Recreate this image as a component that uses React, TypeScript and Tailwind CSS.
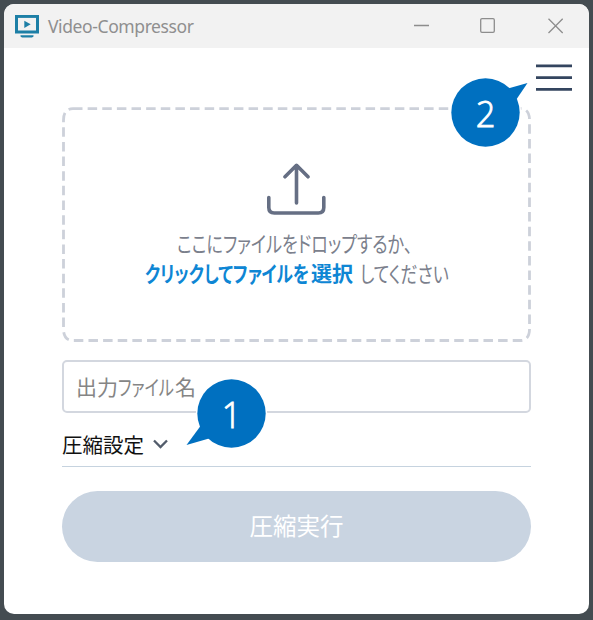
import React from 'react';

const jp = "font-['Noto_Sans_CJK_JP','Noto_Sans',sans-serif]";
const kana = "inline-block origin-left whitespace-nowrap [font-feature-settings:'palt']";

function Callout({ n, className, tail }: { n: string; className: string; tail: string }) {
  return (
    <div className={`absolute h-[69px] w-[69px] ${className}`}>
      <svg className="absolute inset-0 overflow-visible" width="69" height="69" viewBox="0 0 69 69">
        <circle cx="34.5" cy="34.5" r="34.2" fill="#0070c0" stroke="#fff" strokeWidth="3" paintOrder="stroke" />
        <path d={tail} fill="#0070c0" />
      </svg>
      <span className="relative flex h-full w-full items-center justify-center font-['Open_Sans','Noto_Sans',sans-serif] text-[37px] leading-none font-light text-white [-webkit-text-stroke:0.9px_white]">
        <span className="scale-x-[0.93]">{n}</span>
      </span>
    </div>
  );
}

function TitleBar() {
  return (
    <header className="flex h-11 shrink-0 items-center bg-[#f2f2f2] pl-[11px]">
      <svg width="24" height="23" viewBox="0 0 24 23" fill="none">
        <rect x="1.5" y="1.4" width="21" height="15.6" stroke="#1d7fa6" strokeWidth="3" />
        <path d="M9.3 5.7 15.7 9.3 9.3 12.9Z" fill="#1d7fa6" />
        <path d="M5.5 20.2h13v1.3l-1.5 1H7l-1.5-1Z" fill="#1d7fa6" />
      </svg>
      <span className="ml-[9px] grow whitespace-nowrap font-['Noto_Sans',sans-serif] text-[17.5px] tracking-[-0.4px] text-[#8f8f8f]">
        Video-Compressor
      </span>
      <svg className="mr-[24px]" width="151" height="16" viewBox="0 0 151 16" fill="none" stroke="#8d8d8d" strokeWidth="1.3">
        <path d="M0 7.500h15" />
        <rect x="66.7" y="0.7" width="13.6" height="13.6" rx="1.3" />
        <path d="m134.500.8 14.2 14.2M148.700.8l-14.2 14.2" />
      </svg>
    </header>
  );
}

function DropZone() {
  return (
    <section className="relative flex h-[235px] w-[469px] flex-col items-center pt-[56px]">
      <svg className="absolute inset-0" width="469" height="235" fill="none">
        <path
          d="M11 1.6H458Q467.500 1.600 467.500 13V222Q467.500 233.500 458 233.500H11Q1.500 233.500 1.500 222V13Q1.500 1.600 11 1.600"
          stroke="#cdd1da"
          strokeWidth="2.8"
          strokeDasharray="9.500 5.130"
        />
      </svg>
      <svg width="60" height="53" viewBox="0 0 60 53" fill="none" stroke="#666f84" strokeWidth="3.6" strokeLinecap="round" strokeLinejoin="round">
        <path d="M29.500 40V3M18 13.800 29.500 2.300 41 13.800M1.800 34.500v10q0 5.500 5.500 5.500h44q5.500 0 5.500-5.500v-10" />
      </svg>
      <div className={`mt-[11px] w-full text-[22px] leading-[30px] whitespace-nowrap text-[#7b808c] ${jp}`}>
        <div className="flex pl-[115px]">
          <span className={`${kana} scale-x-[0.775]`}>ここにファイルをドロップするか、</span>
        </div>
        <div className="flex pl-[83px]">
          <b className="flex text-[#0e86d4]">
            <span className="w-[166px]">
              <span className={`${kana} scale-x-[0.766]`}>クリックしてファイルを</span>
            </span>
            <span className="w-[49px] text-[21px]">選択</span>
          </b>
          <span className={`${kana} scale-x-[0.77]`}>してください</span>
        </div>
      </div>
    </section>
  );
}

export default function App() {
  return (
    <div className="relative h-[620px] w-[593px] overflow-hidden bg-[#444c51] pt-1 pl-1">
      <main className="flex h-[610px] w-[585px] flex-col overflow-hidden rounded-[10px] bg-white">
        <TitleBar />
        <div className="flex h-[59px] shrink-0 justify-end pt-4 pr-[17px]">
          <svg width="36" height="28" viewBox="0 0 36 28" stroke="#34455f" strokeWidth="2.7">
            <path d="M0 1.900h36M0 13.600h36M0 25.300h36" />
          </svg>
        </div>
        <div className="flex flex-col pl-[58px]">
          <DropZone />
          <div className={`mt-[18px] flex h-[53px] w-[469px] items-center rounded-[5px] border-2 border-[#d3d7df] pl-3 text-[21px] text-[#858585] ${jp}`}>
            <span>出力</span>
            <span className="w-[57px]">
              <span className={`${kana} scale-x-[0.77]`}>ファイル</span>
            </span>
            <span>名</span>
          </div>
          <div className={`flex h-[54px] w-[469px] items-center border-b-[1.500px] border-[#c6d3df] pt-[9px] text-[20.500px] text-[#111] ${jp}`}>
            <span className="w-[82px] whitespace-nowrap">圧縮設定</span>
            <svg className="ml-2" width="17" height="12" viewBox="0 0 17 12" fill="none" stroke="#525c6b" strokeWidth="2.300">
              <path d="m2 2.500 6.500 6.500L15 2.500" />
            </svg>
          </div>
          <div className={`mt-[24px] flex h-[71px] w-[469px] items-center justify-center rounded-full bg-[#c9d4e1] pb-0.5 text-[23.500px] text-white ${jp}`}>
            圧縮実行
          </div>
        </div>
      </main>
      <Callout n="2" className="top-[78px] left-[451px]" tail="M57 10.500 76.500 5 64 23.500Z" />
      <Callout n="1" className="top-[379px] left-[197px]" tail="M3.500 47-10.500 66 12 59.500Z" />
    </div>
  );
}
